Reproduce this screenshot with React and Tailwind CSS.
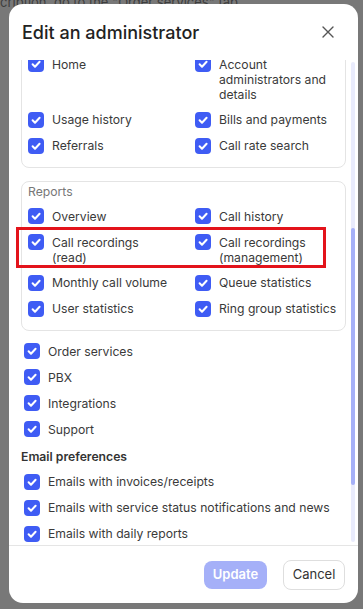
import React from 'react';

const font = { fontFamily: 'Inter, "Noto Sans", sans-serif' };

const Check = () => (
  <span className="mt-[-0.5px] flex h-4 w-4 shrink-0 items-center justify-center rounded-[4px] bg-[#3f5cf4]">
    <svg width="16" height="16" viewBox="0 0 16 16" fill="none">
      <path d="M4.6 8.3l2.4 2.4 4.6-5" stroke="white" strokeWidth="2" strokeLinecap="round" strokeLinejoin="round" />
    </svg>
  </span>
);

const Item = ({ label }) => (
  <div className="flex items-start gap-2">
    <Check />
    <span className="text-[12.2px] leading-[15px] text-[#3a3a3a]">{label}</span>
  </div>
);

const Card = ({ title, items, children, className = '' }) => (
  <div className={`relative rounded-lg border border-[#e4e4e4] pl-[6px] pr-[2px] pb-[13px] ${className}`}>
    {title && <div className="mb-[10px] text-[12.2px] leading-[15px] text-[#777]">{title}</div>}
    <div className="grid grid-cols-[144px_1fr] gap-x-[23px] gap-y-[10.5px]">
      {items.map((it) => (
        <Item key={it} label={it} />
      ))}
    </div>
    {children}
  </div>
);

export default function App() {
  const general = ['Home', 'Account administrators and details', 'Usage history', 'Bills and payments', 'Referrals', 'Call rate search'];
  const reports = ['Overview', 'Call history', 'Call recordings (read)', 'Call recordings (management)', 'Monthly call volume', 'Queue statistics', 'User statistics', 'Ring group statistics'];
  const sections = ['Order services', 'PBX', 'Integrations', 'Support'];
  const emails = ['Emails with invoices/receipts', 'Emails with service status notifications and news', 'Emails with daily reports'];

  return (
    <div className="h-[609px] w-[363px] overflow-hidden bg-[#787878]" style={font}>
      <div className="h-[4px] overflow-visible whitespace-nowrap text-[13px] leading-[4px] text-[#3d3d3d]">
        cription, go to the "Order services" tab
      </div>
      <div className="relative ml-[9px] flex h-[599px] w-[349px] flex-col rounded-[14px] bg-white">
        {/* Header */}
        <div className="flex h-[56px] shrink-0 items-center justify-between pl-[13px] pr-[24px]">
          <h2 className="text-[18px] font-medium text-[#222]">Edit an administrator</h2>
          <svg width="12" height="12" viewBox="0 0 12 12" fill="none">
            <path d="M1 1l10 10M11 1L1 11" stroke="#555" strokeWidth="1.4" strokeLinecap="round" />
          </svg>
        </div>

        {/* Body */}
        <div className="flex min-h-0 flex-1">
          <div className="w-[337px] overflow-hidden pl-[12px]">
            <Card items={general} className="mt-[-17.5px] pt-[13px]" />
            <Card title="Reports" items={reports} className="mt-[13px] pt-[2px]">
              <div className="absolute left-[-6px] top-[45px] h-[41px] w-[310px] border-[3px] border-[#e3131b]" />
            </Card>
            <div className="mt-[13px] flex flex-col gap-[10.5px] pl-[3px]">
              {sections.map((s) => (
                <Item key={s} label={s} />
              ))}
            </div>
            <div className="mt-[12px] text-[12.2px] font-semibold leading-[15px] text-[#333]">Email preferences</div>
            <div className="mt-[10px] flex flex-col gap-[10.5px] pl-[3px]">
              {emails.map((s) => (
                <Item key={s} label={s} />
              ))}
            </div>
          </div>
          <div className="ml-[5px] mt-[2px] mb-[3px] flex w-[4px] flex-col rounded-full bg-[#e9ebfc]">
            <div className="mt-[166px] h-[257px] rounded-full bg-[#a5b0f8]" />
          </div>
        </div>

        {/* Footer */}
        <div className="flex h-[58px] shrink-0 items-center justify-end gap-4 border-t border-[#e5e5e5] pr-[13px]">
          <button className="h-[28px] w-[63px] rounded-lg bg-[#a5b0f8] text-[13px] font-semibold text-white">Update</button>
          <button className="h-[30px] w-[62px] rounded-lg border border-[#dedede] bg-white text-[13px] text-[#333]">Cancel</button>
        </div>
      </div>
    </div>
  );
}
